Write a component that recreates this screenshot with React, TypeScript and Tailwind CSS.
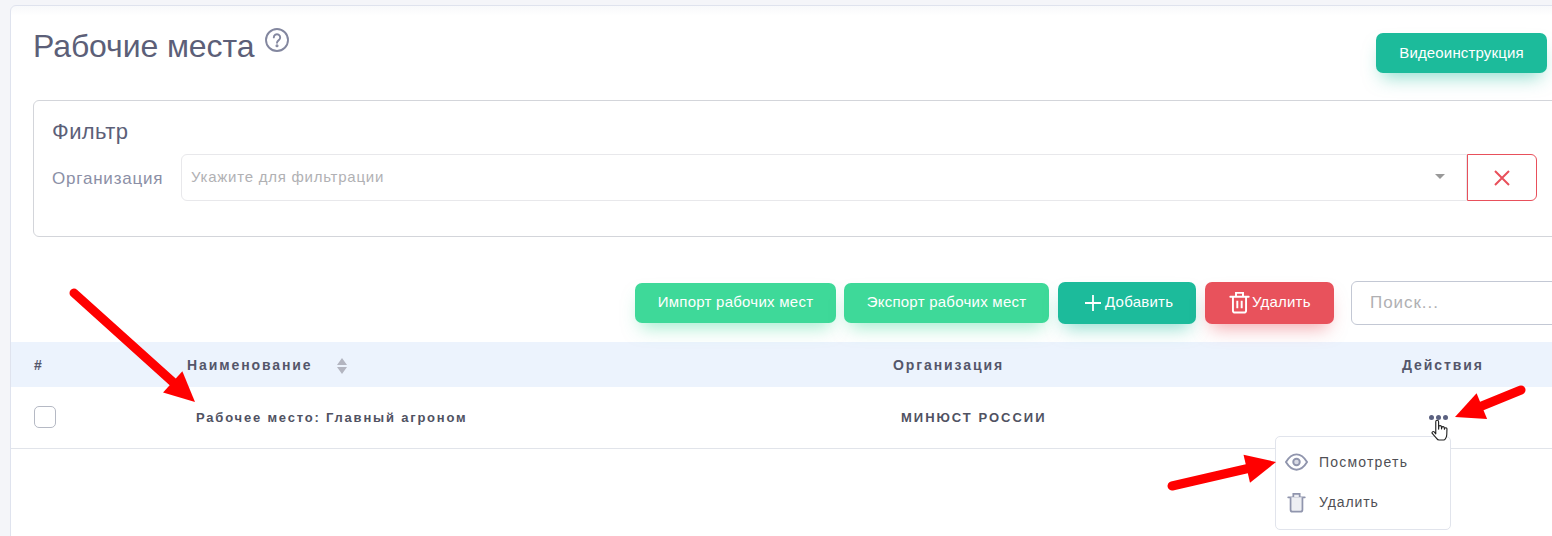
import React from "react";

const Arrow = ({ x1, y1, x2, y2, head, w }: { x1: number; y1: number; x2: number; y2: number; head: number; w: number }) => {
  const dx = x2 - x1, dy = y2 - y1, L = Math.hypot(dx, dy), ux = dx / L, uy = dy / L;
  const bx = x2 - ux * head, by = y2 - uy * head, px = -uy * head * 0.48, py = ux * head * 0.48;
  return (
    <g>
      <line x1={x1} y1={y1} x2={bx} y2={by} stroke="#ff0000" strokeWidth={w} strokeLinecap="round" />
      <polygon points={`${x2},${y2} ${bx + px},${by + py} ${bx - px},${by - py}`} fill="#ff0000" />
    </g>
  );
};

const Trash = ({ cls, fill, bars }: { cls: string; fill?: string; bars?: boolean }) => (
  <svg viewBox="0 0 24 26" className={cls} fill={fill ?? "none"} stroke="currentColor" strokeWidth="2.2">
    <path d="M1.500 6.500h21" strokeLinecap="round" />
    <path d="M8 6V2h8v4" />
    <path d="M4.500 6.500V22a2.500 2.500 0 0 0 2.500 2.500h10a2.500 2.500 0 0 0 2.500-2.500V6.500" />
    {bars && <path d="M9.500 11v8.500M14.500 11v8.500" />}
  </svg>
);

export default function App() {
  return (
    <div className="w-[1552px] h-[536px] overflow-hidden relative bg-[#f4f5f9] pt-[5px] pl-[10px] font-['Liberation_Sans',Arial,sans-serif]">
      <div className="w-[1600px] h-[560px] bg-white border border-[#dfe3ee] rounded-tl-[6px] bg-gradient-to-b from-[#f8f9fb] to-white to-[10px]">
        <div className="flex h-[94px]">
          <div className="w-[1365px] pl-[22px] pt-[22px] flex items-start gap-[11px]">
            <h1 className="text-[32px] leading-[36px] text-[#5c5f78] tracking-[-0.1px]">Рабочие места</h1>
            <svg viewBox="0 0 24 24" className="w-[24px] h-[24px] text-[#83879f]" fill="none" stroke="currentColor" strokeWidth="1.900">
              <circle cx="12" cy="12" r="11" />
              <path d="M8.800 9.400a3.200 3.200 0 1 1 5 2.700c-1.100.8-1.800 1.300-1.800 2.700" strokeLinecap="round" />
              <circle cx="12" cy="17.800" r="0.600" fill="currentColor" />
            </svg>
          </div>
          <div className="pt-[27px]">
            <button className="w-[171px] h-[40px] rounded-[7px] bg-[#1cbb9b] text-white text-[15px] tracking-[0.15px] shadow-[0_10px_18px_-6px_rgba(28,187,155,0.5)]">Видеоинструкция</button>
          </div>
        </div>

        <div className="ml-[22px] w-[1560px] h-[137px] border border-[#d3d5da] rounded-[6px] pl-[18px] pt-[18px]">
          <div className="text-[22px] leading-[26px] text-[#5c5f78] tracking-[0.4px]">Фильтр</div>
          <div className="flex items-start mt-[9px]">
            <div className="w-[129px] pt-[16px] text-[17px] leading-[18px] text-[#8b8fa6] tracking-[0.8px]">Организация</div>
            <div className="w-[1286px] h-[47px] border border-[#e8e8eb] rounded-l-[6px] flex items-center justify-between pl-[9px] pr-[21px] text-[15px] text-[#b1b1b4] tracking-[0.75px]">
              <span>Укажите для фильтрации</span>
              <span className="w-0 h-0 border-x-[5px] border-x-transparent border-t-[5px] border-t-[#999999] -mt-[2px]" />
            </div>
            <div className="w-[70px] h-[47px] border border-[#e8505b] rounded-r-[6px] flex items-center justify-center">
              <svg viewBox="0 0 16 16" className="w-[16px] h-[16px]" fill="none" stroke="#e8505b" strokeWidth="2"><path d="M1 1l14 14M15 1L1 15" /></svg>
            </div>
          </div>
        </div>

        <div className="flex items-center h-[105px] pl-[624px] pt-[26px]">
          <button className="w-[201px] h-[40px] rounded-[7px] bg-[#3ed999] text-white text-[15px] tracking-[0.25px] shadow-[0_10px_18px_-6px_rgba(62,217,153,0.5)]">Импорт рабочих мест</button>
          <button className="ml-[8px] w-[205px] h-[40px] rounded-[7px] bg-[#3ed999] text-white text-[15px] tracking-[0.25px] shadow-[0_10px_18px_-6px_rgba(62,217,153,0.5)]">Экспорт рабочих мест</button>
          <button className="ml-[9px] w-[138px] h-[42px] rounded-[7px] bg-[#1cbb9b] text-white text-[15px] tracking-[0.25px] flex items-center justify-start pl-[27px] gap-[4px] shadow-[0_10px_18px_-6px_rgba(28,187,155,0.5)]">
            <svg viewBox="0 0 16 16" className="w-[16px] h-[16px]" fill="none" stroke="currentColor" strokeWidth="1.800"><path d="M8 0v16M0 8h16" /></svg>
            Добавить
          </button>
          <button className="ml-[9px] w-[129px] h-[42px] rounded-[7px] bg-[#e8525c] text-white text-[15px] tracking-[0.2px] flex items-center justify-start pl-[24px] gap-[2px] shadow-[0_10px_18px_-6px_rgba(232,82,92,0.5)]">
            <Trash cls="w-[21px] h-[23px]" bars />
            Удалить
          </button>
          <div className="ml-[17px] w-[240px] h-[44px] border border-[#c3c8d4] rounded-[6px] flex items-center pl-[18px] text-[17px] text-[#b0b0b3] tracking-[0.95px] shrink-0">Поиск...</div>
        </div>

        <div className="grid grid-cols-[176px_706px_509px_1fr] h-[45px] pt-[2px] items-center bg-[#ecf3fd] text-[14px] font-bold text-[#54566a] tracking-[1.9px]">
          <div className="pl-[23px]">#</div>
          <div className="flex items-center">
            <span>Наименование</span>
            <svg viewBox="0 0 10 16" className="ml-[24px] w-[10px] h-[16px]" fill="#b3b5c0"><path d="M5 0l5 7H0zM5 16L0 9h10z" /></svg>
          </div>
          <div>Организация</div>
          <div>Действия</div>
        </div>

        <div className="grid grid-cols-[176px_706px_509px_1fr] h-[62px] items-center border-b border-[#e1e4ea] text-[13px] font-bold text-[#505262] tracking-[1.8px]">
          <div className="pl-[23px]"><div className="w-[22px] h-[22px] border border-[#b5b9c4] rounded-[5px] -mt-[1px]" /></div>
          <div className="pl-[9px]">Рабочее место: Главный агроном</div>
          <div className="pl-[8px] tracking-[2px]">МИНЮСТ РОССИИ</div>
          <div className="pl-[27px] flex gap-[2px] -mt-[1px]">
            <span className="w-[5px] h-[5px] rounded-full bg-[#5b6180]" />
            <span className="w-[5px] h-[5px] rounded-full bg-[#5b6180]" />
            <span className="w-[5px] h-[5px] rounded-full bg-[#5b6180]" />
          </div>
        </div>
      </div>

      <div className="absolute left-[1275px] top-[436px] w-[176px] h-[94px] bg-white border border-[#e1e4ec] rounded-[5px] pt-[5px] text-[14px] text-[#4f4f55] tracking-[1.2px]">
        <div className="flex items-center h-[40px] pl-[9px]">
          <svg viewBox="0 0 24 18" className="w-[23px] h-[18px] text-[#9095ad]" fill="none" stroke="currentColor" strokeWidth="2">
            <path d="M1 9c3-5 7-8 11-8s8 3 11 8c-3 5-7 8-11 8S4 14 1 9z" />
            <circle cx="12" cy="9" r="3.400" fill="#d8dae4" />
          </svg>
          <span className="ml-[11px]">Посмотреть</span>
        </div>
        <div className="flex items-center h-[40px] pl-[11px]">
          <span className="text-[#9095ad]"><Trash cls="w-[19px] h-[21px]" fill="#eeeff3" /></span>
          <span className="ml-[13px] tracking-[0.9px]">Удалить</span>
        </div>
      </div>

      <svg viewBox="0 0 20 24" className="absolute left-[1431px] top-[419px] w-[19px] h-[24px]" fill="#ffffff" stroke="#222222" strokeWidth="1.200" strokeLinejoin="round">
        <path d="M5 2.200a1.500 1.500 0 0 1 3 0V10l.2-2.400a1.400 1.400 0 0 1 2.800.2l.1 2 .2-1.500a1.400 1.400 0 0 1 2.700.3l.1 1.600.2-.8a1.300 1.300 0 0 1 2.500.4l-.2 6.200c-.1 1.700-.6 3-1.400 4.200-.5.8-1 1.300-1.900 1.300H8.500c-1.200 0-1.900-.6-2.600-1.700L1.300 14.600c-.8-1.300.8-2.800 2.100-1.600L5 15z" />
      </svg>

      <svg className="absolute left-0 top-0 w-[1552px] h-[536px] pointer-events-none" viewBox="0 0 1552 536">
        <Arrow x1={74} y1={293} x2={195} y2={402} head={30} w={9} />
        <Arrow x1={1521} y1={390} x2={1455} y2={417} head={29} w={9} />
        <Arrow x1={1172} y1={486} x2={1276} y2={462} head={30} w={9} />
      </svg>
    </div>
  );
}
